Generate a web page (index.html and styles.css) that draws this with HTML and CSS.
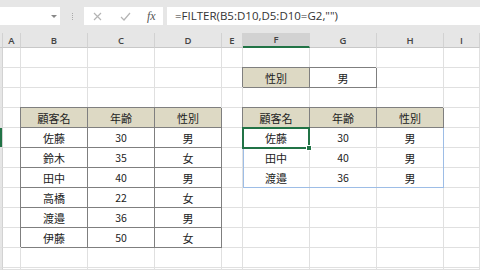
FILE: index.html
```html
<!DOCTYPE html>
<html lang="ja">

<head>
  <meta charset="UTF-8" />
  <meta name="viewport" content="width=device-width, initial-scale=1.0" />
  <title>FILTER</title>
  <link rel="stylesheet" href="styles.css">
</head>

<body>
  <div class="toolbar">
    <div class="namebox"><span class="caret"></span></div>
    <div class="grip"></div>
    <div class="fxbox">
      <svg class="ico" width="9" height="9" viewBox="0 0 9 9"><path d="M1 1L8 8M8 1L1 8" stroke="#b4b4b4" stroke-width="1.2" fill="none" /></svg>
      <svg class="ico" width="11" height="9" viewBox="0 0 11 9"><path d="M1 5L4 8L10 1" stroke="#b4b4b4" stroke-width="1.2" fill="none" /></svg>
      <span class="fx">fx</span>
    </div>
    <div class="formula">=FILTER(B5:D10,D5:D10=G2,"")</div>
  </div>

  <div class="sheet">
    <!-- column headers -->
    <div class="h"></div><div class="h">A</div><div class="h">B</div><div class="h">C</div><div class="h">D</div>
    <div class="h">E</div><div class="h on">F</div><div class="h">G</div><div class="h">H</div><div class="h">I</div>

    <!-- row 1 -->
    <div class="c r"></div><div class="c"></div><div class="c"></div><div class="c"></div><div class="c"></div>
    <div class="c"></div><div class="c"></div><div class="c"></div><div class="c"></div><div class="c"></div>
    <!-- row 2 -->
    <div class="c r"></div><div class="c"></div><div class="c"></div><div class="c"></div><div class="c"></div>
    <div class="c"></div><div class="c b t">性別</div><div class="c b">男</div><div class="c"></div><div class="c"></div>
    <!-- row 3 -->
    <div class="c r"></div><div class="c"></div><div class="c"></div><div class="c"></div><div class="c"></div>
    <div class="c"></div><div class="c"></div><div class="c"></div><div class="c"></div><div class="c"></div>
    <!-- row 4 -->
    <div class="c r"></div><div class="c"></div><div class="c b t">顧客名</div><div class="c b t">年齢</div><div class="c b t">性別</div>
    <div class="c"></div><div class="c b t">顧客名</div><div class="c b t">年齢</div><div class="c b t">性別</div><div class="c"></div>
    <!-- row 5 -->
    <div class="c r on"></div><div class="c"></div><div class="c b">佐藤</div><div class="c b n">30</div><div class="c b">男</div>
    <div class="c"></div><div class="c">佐藤</div><div class="c n">30</div><div class="c">男</div><div class="c"></div>
    <!-- row 6 -->
    <div class="c r"></div><div class="c"></div><div class="c b">鈴木</div><div class="c b n">35</div><div class="c b">女</div>
    <div class="c"></div><div class="c">田中</div><div class="c n">40</div><div class="c">男</div><div class="c"></div>
    <!-- row 7 -->
    <div class="c r"></div><div class="c"></div><div class="c b">田中</div><div class="c b n">40</div><div class="c b">男</div>
    <div class="c"></div><div class="c">渡邉</div><div class="c n">36</div><div class="c">男</div><div class="c"></div>
    <!-- row 8 -->
    <div class="c r"></div><div class="c"></div><div class="c b">高橋</div><div class="c b n">22</div><div class="c b">女</div>
    <div class="c"></div><div class="c"></div><div class="c"></div><div class="c"></div><div class="c"></div>
    <!-- row 9 -->
    <div class="c r"></div><div class="c"></div><div class="c b">渡邉</div><div class="c b n">36</div><div class="c b">男</div>
    <div class="c"></div><div class="c"></div><div class="c"></div><div class="c"></div><div class="c"></div>
    <!-- row 10 -->
    <div class="c r"></div><div class="c"></div><div class="c b">伊藤</div><div class="c b n">50</div><div class="c b">女</div>
    <div class="c"></div><div class="c"></div><div class="c"></div><div class="c"></div><div class="c"></div>
    <!-- row 11 -->
    <div class="c r"></div><div class="c"></div><div class="c"></div><div class="c"></div><div class="c"></div>
    <div class="c"></div><div class="c"></div><div class="c"></div><div class="c"></div><div class="c"></div>
    <!-- row 12, only its top edge shows -->
    <div class="c r"></div><div class="c"></div><div class="c"></div><div class="c"></div><div class="c"></div>
    <div class="c"></div><div class="c"></div><div class="c"></div><div class="c"></div><div class="c"></div>

    <div class="spill"></div>
    <div class="select"></div>
  </div>
</body>

</html>
```

FILE: styles.css
```css
body {
  margin: 0;
  width: 480px;
  height: 270px;
  overflow: hidden;
  background-color: #fff;
  font-family: "Noto Sans CJK JP", "Noto Sans", sans-serif;
}

.toolbar {
  display: flex;
  align-items: flex-start;
  height: 33px;
  padding-top: 7px;
  box-sizing: border-box;
  background-color: #e6e6e6;
}

.namebox {
  position: relative;
  width: 60px;
  height: 18px;
  background-color: #fff;
}

.caret {
  position: absolute;
  right: 3px;
  top: 8px;
  border-left: 3px solid transparent;
  border-right: 3px solid transparent;
  border-top: 3px solid #888;
}

.grip {
  width: 0;
  height: 7px;
  margin: 6px 11px 0 12px;
  border-left: 1px dotted #aaa;
}

.fxbox {
  display: flex;
  align-items: center;
  width: 79px;
  height: 18px;
  background-color: #fff;
}

.fxbox .ico:nth-child(1) {
  margin-left: 9px;
}

.fxbox .ico:nth-child(2) {
  margin-left: 18px;
}

.fx {
  margin-left: 16px;
  font-family: "Liberation Serif", serif;
  font-style: italic;
  font-size: 12px;
  color: #555;
}

.formula {
  flex: 1;
  height: 18px;
  margin-left: 4px;
  padding-left: 8px;
  background-color: #fff;
  font-family: "Open Sans", sans-serif;
  font-size: 11.5px;
  line-height: 18px;
  color: #333;
}

.sheet {
  position: relative;
  display: grid;
  grid-template-columns: 3px 18px 67px 67px 67px 21px 67px 67px 67px 36px;
  grid-template-rows: 15px repeat(11, 20px) 2px;
  overflow: hidden;
}

.h,
.c {
  box-sizing: border-box;
  display: flex;
  align-items: center;
  justify-content: center;
  border-right: 1px solid #e0e0e0;
  border-bottom: 1px solid #e0e0e0;
}

.h {
  background-color: #e6e6e6;
  border-right-color: #d2d2d2;
  border-bottom-color: #c8c8c8;
  font-family: "Open Sans", sans-serif;
  font-size: 9.5px;
  font-weight: 600;
  color: #444;
}

.h.on {
  background-color: #d2d2d2;
  border-bottom: 2px solid #217346;
}

.c {
  font-size: 11px;
  color: #222;
}

.c.n {
  font-size: 10.5px;
}

.r {
  background-color: #e6e6e6;
  border-right-color: #d2d2d2;
}

.r.on {
  background-color: #217346;
}

.b {
  border-right-color: #7f7f7f;
  border-bottom-color: #7f7f7f;
  box-shadow: -1px -1px 0 #7f7f7f;
}

.t {
  background-color: #ddd9c4;
}

.spill {
  position: absolute;
  grid-row: 6 / 9;
  grid-column: 7 / 10;
  inset: 0 0 0 0;
  border: 1px solid #9dbde6;
  border-top: none;
}

.select {
  position: absolute;
  grid-row: 6 / 7;
  grid-column: 7 / 8;
  inset: -1px 0 -1px -1px;
  border: 2px solid #217346;
}

.select::after {
  content: "";
  position: absolute;
  right: -4px;
  bottom: -4px;
  width: 4px;
  height: 4px;
  background-color: #217346;
  border: 1px solid #fff;
}
```
